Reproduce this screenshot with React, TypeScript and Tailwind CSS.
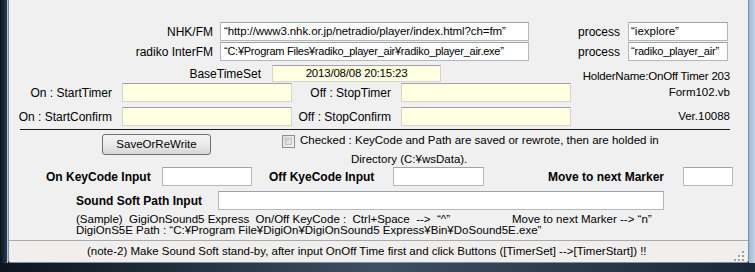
import React from 'react';

const Field = ({ className = '', children }: { className?: string; children?: React.ReactNode }) => (
    <div
        className={`flex items-center shrink-0 border border-[#b3b7be] border-t-[#9ea3ab] whitespace-nowrap overflow-hidden ${className}`}
    >
        {children}
    </div>
);

const App = () => {
    return (
        <div className="w-[755px] h-[272px] flex flex-col bg-[#152030] overflow-hidden font-['Liberation_Sans',Arial,sans-serif] text-[12px] text-black">
            <div className="flex h-[263px]">
                {/* left glass frame */}
                <div className="w-[8px] bg-gradient-to-r from-[#0b121c] to-[#2a3b50] border-r border-[#b4c3d2]" />

                {/* form client area */}
                <div className="flex-1 flex flex-col bg-[#f0f0f0] border-l border-r border-b border-[#7d8fa2] rounded-b-[3px]">
                    {/* NHK / radiko rows */}
                    <div className="flex items-center h-[19px] mt-[22px]">
                        <span className="w-[204px] text-right">NHK/FM</span>
                        <Field className="ml-[7px] w-[309px] h-[19px] bg-white pl-[3px] text-[11.5px] tracking-[-0.1px]">“http://www3.nhk.or.jp/netradio/player/index.html?ch=fm”</Field>
                        <span className="ml-[49px] w-[50px]">process</span>
                        <Field className="w-[100px] h-[19px] bg-white pl-[2px] text-[11.5px]">“iexplore”</Field>
                    </div>
                    <div className="flex items-center h-[19px] mt-[1px]">
                        <span className="w-[204px] text-right">radiko InterFM</span>
                        <Field className="ml-[7px] w-[309px] h-[19px] bg-white pl-[3px] text-[11px] tracking-[-0.25px]">“C:¥Program Files¥radiko_player_air¥radiko_player_air.exe”</Field>
                        <span className="ml-[49px] w-[50px]">process</span>
                        <Field className="w-[100px] h-[19px] bg-white pl-[2px] text-[11px] tracking-[-0.2px]">“radiko_player_air”</Field>
                    </div>

                    {/* timer rows */}
                    <div className="flex h-[17px] mt-[4px] pr-[18px]">
                        <span className="w-[252px] text-right self-center">BaseTimeSet</span>
                        <Field className="ml-[11px] w-[169px] h-[17px] bg-[#ffffe1] justify-center border-[#d6d6c8]">
                            <span className="text-[11.5px] tracking-[-0.2px]">2013/08/08 20:15:23</span>
                        </Field>
                        <span className="ml-auto self-end translate-y-[3px] text-[11.5px] tracking-[-0.2px]">HolderName:OnOff Timer 203</span>
                    </div>
                    <div className="flex items-center h-[19px] mt-[1px] pr-[18px]">
                        <span className="w-[103px] text-right">On : StartTimer</span>
                        <Field className="ml-[10px] w-[170px] h-[19px] bg-[#ffffe1] border-[#d6d6c8]" />
                        <span className="w-[99px] text-right">Off : StopTimer</span>
                        <Field className="ml-[10px] w-[170px] h-[19px] bg-[#ffffe1] border-[#d6d6c8]" />
                        <span className="ml-auto text-[11.5px]">Form102.vb</span>
                    </div>
                    <div className="flex items-center h-[19px] mt-[5px] pr-[18px]">
                        <span className="w-[103px] text-right">On : StartConfirm</span>
                        <Field className="ml-[10px] w-[170px] h-[19px] bg-[#ffffe1] border-[#d6d6c8]" />
                        <span className="w-[99px] text-right">Off : StopConfirm</span>
                        <Field className="ml-[10px] w-[170px] h-[19px] bg-[#ffffe1] border-[#d6d6c8]" />
                        <span className="ml-auto text-[11.5px]">Ver.10088</span>
                    </div>

                    <div className="ml-[11px] w-[710px] mt-[3px] border-t border-[#1a1a1a]" />

                    {/* save + note */}
                    <div className="flex h-[36px]">
                        <button className="ml-[93px] mt-[4px] w-[109px] h-[21px] shrink-0 rounded-[3px] border border-[#707070] bg-gradient-to-b from-[#f3f3f3] via-[#ebebeb] to-[#d6d6d6] text-[11.5px] leading-none">
                            SaveOrReWrite
                        </button>
                        <div className="ml-[71px] mt-[5px] w-[13px] h-[13px] shrink-0 border border-[#8e8f8f] bg-gradient-to-br from-[#dcdcdc] to-[#f6f6f6] p-[2px]">
                            <div className="w-full h-full bg-gradient-to-br from-[#cfcfcf] to-[#eeeeee] border border-[#c2c2c2]" />
                        </div>
                        <div className="ml-[5px] mt-[1px] leading-[19px] text-[11.5px] whitespace-nowrap">
                            <div>Checked : KeyCode and Path are saved or rewrote, then are holded in</div>
                            <div className="ml-[51px]">Directory (C:¥wsData).</div>
                        </div>
                    </div>

                    {/* key code inputs */}
                    <div className="flex items-center h-[19px] mt-[1px] font-bold">
                        <span className="ml-[37px] w-[116px]">On KeyCode Input</span>
                        <Field className="w-[90px] h-[19px] bg-white" />
                        <span className="ml-[17px] w-[124px]">Off KyeCode Input</span>
                        <Field className="w-[91px] h-[19px] bg-white" />
                        <span className="ml-[64px] w-[135px]">Move to next Marker</span>
                        <Field className="w-[50px] h-[19px] bg-white" />
                    </div>
                    <div className="flex items-center h-[19px] mt-[5px]">
                        <span className="ml-[67px] w-[142px] font-bold">Sound Soft Path Input</span>
                        <Field className="w-[446px] h-[19px] bg-white" />
                    </div>

                    {/* sample */}
                    <div className="ml-[67px] mt-[4px] text-[11.5px] leading-[11px] whitespace-nowrap">
                        <div className="flex">
                            <span className="w-[436px]">(Sample)&nbsp; GigiOnSound5 Express&nbsp; On/Off KeyCode :&nbsp; Ctrl+Space&nbsp; --&gt;&nbsp; “^”</span>
                            <span>Move to next Marker --&gt; “n”</span>
                        </div>
                        <div>DigiOnS5E Path : “C:¥Program File¥DigiOn¥DigiOnSound5 Express¥Bin¥DoSound5E.exe”</div>
                    </div>

                    {/* status bar */}
                    <div className="mt-auto h-[22px] flex items-center border-t border-[#a9a9a9] bg-[#f1efed] rounded-b-[3px]">
                        <span className="ml-[78px] text-[11.5px] whitespace-nowrap">
                            (note-2) Make Sound Soft stand-by, after input OnOff Time first and click Buttons ([TimerSet] --&gt;[TimerStart]) !!
                        </span>
                        <svg className="ml-auto mr-[4px] mt-[8px]" width="10" height="10" viewBox="0 0 10 10">
                            {[[8, 0], [8, 4], [4, 4], [8, 8], [4, 8], [0, 8]].map(([x, y], i) => (
                                <g key={i}>
                                    <rect x={x + 1} y={y + 1} width="2" height="2" fill="#ffffff" />
                                    <rect x={x} y={y} width="2" height="2" fill="#a0a0a0" />
                                </g>
                            ))}
                        </svg>
                    </div>
                </div>

                {/* right glass frame */}
                <div className="w-[6px] bg-gradient-to-r from-[#9fb9d2] to-[#c0d3e6]" />
            </div>
            {/* bottom glass frame */}
            <div className="flex-1 bg-gradient-to-r from-[#0d1520] via-[#3f4f63] to-[#1b2837]" />
        </div>
    );
};

export default App;
